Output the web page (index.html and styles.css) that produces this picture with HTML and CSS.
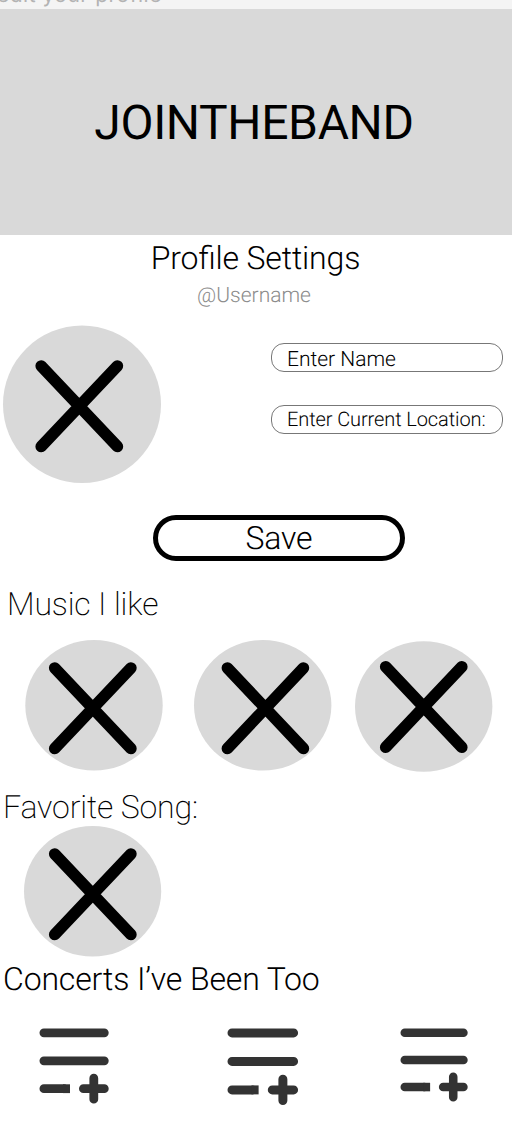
FILE: index.html
```html
<!DOCTYPE html>
<html lang="en">
<head>
<meta charset="utf-8">
<title>Profile Settings</title>
<link rel="stylesheet" href="styles.css">
</head>
<body>
<div class="topbar"><span class="topbar-label">edit your profile</span></div>
<header class="banner"><h1 class="brand">JOINTHEBAND</h1></header>
<main>
  <h2 class="title">Profile Settings</h2>
  <p class="username">@Username</p>
  <section class="profile">
    <svg class="avatar" viewBox="0 0 164 160"><ellipse cx="82" cy="80.3" rx="79" ry="78.7"/><path d="M41.2 42 117.4 122.5M117.4 42 41.2 122.5"/></svg>
    <div class="fields">
      <div class="field"><span class="name-label">Enter Name</span></div>
      <div class="field"><span class="location-label">Enter Current Location:</span></div>
    </div>
  </section>
  <button class="save"><span class="save-label">Save</span></button>
  <h3 class="heading music-heading">Music I like</h3>
  <section class="music">
    <svg class="cover" viewBox="0 0 138 132"><ellipse cx="69" cy="65.3" rx="68.7" ry="65.3"/><path d="M29.7 28 105.9 108.5M105.9 28 29.7 108.5"/></svg>
    <svg class="cover" viewBox="0 0 138 132"><ellipse cx="68.7" cy="65.3" rx="68.7" ry="65.3"/><path d="M33.4 28 109.4 108.5M109.4 28 33.4 108.5"/></svg>
    <svg class="cover" viewBox="0 0 138 132"><ellipse cx="68.7" cy="66.5" rx="68.7" ry="65.3"/><path d="M30.7 26.8 106.8 107.3M106.8 26.8 30.7 107.3"/></svg>
  </section>
  <h3 class="heading song-heading">Favorite Song:</h3>
  <svg class="cover song" viewBox="0 0 138 132"><ellipse cx="68.6" cy="65.3" rx="68.6" ry="65.3"/><path d="M30.7 28 106.9 108.5M106.9 28 30.7 108.5"/></svg>
  <h3 class="heading concert-heading">Concerts I’ve Been Too</h3>
  <section class="concerts">
    <svg class="add-list" width="70" height="76" viewBox="0 0 70 76"><path d="M4.9 4.8H65.3M4.9 32.8H65.3M4.9 60.7H25M44.4 60.7H65.3M54.8 50.2V71.2"/><path class="end" d="M24 60.7H31"/></svg>
    <svg class="add-list" width="71.4" height="78" viewBox="0 0 70 76.5"><path d="M4.9 4.8H65.3M4.9 32.8H65.3M4.9 60.7H25M44.4 60.7H65.3M54.8 50.2V71.2"/><path class="end" d="M24 60.7H31"/></svg>
    <svg class="add-list" width="68" height="74" viewBox="0 0 70 76"><path d="M4.9 4.8H65.3M4.9 32.8H65.3M4.9 60.7H25M44.4 60.7H65.3M54.8 50.2V71.2"/><path class="end" d="M24 60.7H31"/></svg>
  </section>
</main>
</body>
</html>
```
FILE: styles.css
```css
* { box-sizing: border-box; margin: 0; padding: 0; }
body { width: 512px; height: 1122px; overflow: hidden; background: #fff; color: #000; font-family: Roboto, sans-serif; font-feature-settings: "liga" 1; text-rendering: geometricPrecision; }
main { display: flex; flex-direction: column; }
svg { display: block; overflow: visible; flex: none; }
.topbar { height: 9px; overflow: hidden; background: #f4f4f4; color: #b3b3b3; }
.topbar-label { display: block; margin: -18px 0 0 -3px; white-space: nowrap; font: 400 21px/27px Inter, sans-serif; letter-spacing: .5px; font-feature-settings: normal; }
.banner { height: 226px; padding-top: 85px; background: #d9d9d9; text-align: center; }
.brand { font-size: 48px; font-weight: 400; line-height: 57px; letter-spacing: -.36px; margin-right: 4px; }
.title { margin: 4px 1px 0 0; font-size: 32px; font-weight: 300; line-height: 38px; letter-spacing: -.15px; text-align: center; }
.username { margin: 7px 4px 0 0; font-size: 21px; font-weight: 300; line-height: 24px; text-align: center; color: #8c8c8c; }
.profile { display: flex; justify-content: space-between; height: 160px; margin-top: 16px; padding-right: 9px; }
.avatar { width: 164px; height: 160px; }
.avatar ellipse, .cover ellipse { fill: #d9d9d9; }
.avatar path, .cover path { stroke: #000; stroke-width: 11.6; stroke-linecap: round; fill: none; }
.fields { display: flex; flex-direction: column; gap: 33px; padding-top: 19px; }
.field { width: 232px; height: 29px; padding-left: 15px; border: 1px solid #777; border-radius: 13px; white-space: nowrap; font-weight: 300; }
.name-label { display: block; font-size: 21px; line-height: 33px; }
.location-label { display: block; font-size: 20px; line-height: 27px; letter-spacing: -.1px; }
.save { width: 252px; height: 46px; margin: 31px 0 0 153px; border: 5px solid #000; border-radius: 23px; background: #fff; font: 300 32px/36px Roboto, sans-serif; color: #000; letter-spacing: -.2px; text-rendering: inherit; }
.heading { font-size: 32px; font-weight: 300; line-height: 38px; letter-spacing: -.15px; }
.music-heading { margin: 24px 0 0 7px; font-weight: 200; }
.music { display: grid; grid-template-columns: 169px 161px 138px; margin: 17px 0 0 25px; }
.cover { width: 138px; height: 132px; }
.song-heading { margin: 16px 0 0 3px; font-weight: 200; }
.song { margin-left: 24px; }
.concert-heading { margin: 2px 0 0 3px; }
.concerts { display: flex; align-items: flex-start; padding: 30px 0 0 39px; }
.add-list + .add-list { margin-left: 118px; }
.add-list + .add-list + .add-list { margin-left: 102px; }
.add-list path { stroke: #333; stroke-width: 8.8; stroke-linecap: round; fill: none; }
.add-list .end { stroke-linecap: butt; }
```
